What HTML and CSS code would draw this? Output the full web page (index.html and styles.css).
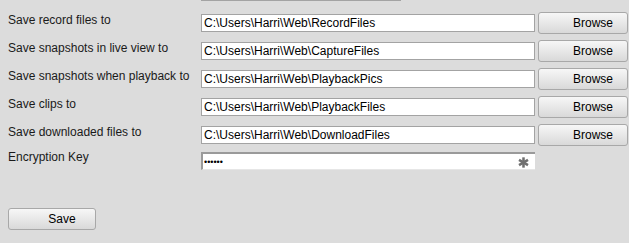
FILE: index.html
```html
<!DOCTYPE html>
<html>
<head>
<meta charset="utf-8">
<link rel="stylesheet" href="styles.css">
</head>
<body>
<div class="page">
  <div class="stub"></div>
  <div class="form">
    <div class="row">
      <label class="lbl">Save record files to</label>
      <input class="field" type="text" value="C:\Users\Harri\Web\RecordFiles">
      <button class="btn browse">Browse</button>
    </div>
    <div class="row">
      <label class="lbl">Save snapshots in live view to</label>
      <input class="field" type="text" value="C:\Users\Harri\Web\CaptureFiles">
      <button class="btn browse">Browse</button>
    </div>
    <div class="row">
      <label class="lbl">Save snapshots when playback to</label>
      <input class="field" type="text" value="C:\Users\Harri\Web\PlaybackPics">
      <button class="btn browse">Browse</button>
    </div>
    <div class="row">
      <label class="lbl">Save clips to</label>
      <input class="field" type="text" value="C:\Users\Harri\Web\PlaybackFiles">
      <button class="btn browse">Browse</button>
    </div>
    <div class="row">
      <label class="lbl">Save downloaded files to</label>
      <input class="field" type="text" value="C:\Users\Harri\Web\DownloadFiles">
      <button class="btn browse">Browse</button>
    </div>
    <div class="row row-key">
      <label class="lbl">Encryption Key</label>
      <div class="pwd">
        <input class="pwd-input" type="password" value="abcdef">
        <svg class="star" width="11" height="11" viewBox="0 0 10 10">
          <g stroke="#707070" stroke-width="2.3" stroke-linecap="butt">
            <line x1="5" y1="0.3" x2="5" y2="9.7"/>
            <line x1="0.9" y1="2.65" x2="9.1" y2="7.35"/>
            <line x1="0.9" y1="7.35" x2="9.1" y2="2.65"/>
          </g>
        </svg>
      </div>
    </div>
  </div>
  <button class="btn save">Save</button>
</div>
</body>
</html>
```

FILE: styles.css
```css
html, body {
  margin: 0;
  padding: 0;
  background: #dcdcdc;
}
body {
  font-family: "Liberation Sans", Arial, sans-serif;
  font-size: 12px;
  color: #1a1a1a;
}
.page {
  width: 629px;
  height: 243px;
  padding-left: 8px;
  box-sizing: border-box;
  overflow: hidden;
}
.stub {
  margin-left: 193px;
  width: 198px;
  height: 0;
  border: 1px solid #a3a3a3;
  border-top: none;
  background: #fff;
}
.form {
  margin-top: 11px;
}
.row {
  display: flex;
  align-items: flex-start;
  height: 28px;
}
.lbl {
  width: 193px;
  line-height: 14px;
  margin-top: 1px;
  white-space: nowrap;
}
.field {
  width: 334px;
  height: 18px;
  margin: 2px 0 0 0;
  box-sizing: border-box;
  border: 1px solid #a3a3a3;
  background: #fff;
  padding: 0 2px;
  font-family: "Liberation Sans", Arial, sans-serif;
  font-size: 12px;
  color: #000;
  outline: none;
}
.btn {
  height: 22px;
  box-sizing: border-box;
  border: 1px solid #a8a8a8;
  border-radius: 3px;
  background: linear-gradient(#f7f7f7, #d9d9d9);
  font-family: "Liberation Sans", Arial, sans-serif;
  font-size: 12px;
  color: #000;
  padding: 0 0 0 20px;
  text-align: center;
  line-height: 20px;
}
.browse {
  width: 90px;
  margin-left: 3px;
}
.row-key {
  height: 25px;
  margin-top: -3px;
}
.pwd {
  width: 334px;
  height: 18px;
  margin-top: 3px;
  box-sizing: border-box;
  border-top: 2px solid #9a9a9a;
  border-left: 2px solid #9a9a9a;
  border-bottom: 1px solid #e6e6e6;
  background: #fff;
  display: flex;
  align-items: center;
  justify-content: space-between;
}
.pwd-input {
  border: none;
  outline: none;
  background: transparent;
  padding: 0 0 0 1px;
  width: 280px;
  height: 15px;
  font-family: "Liberation Sans", Arial, sans-serif;
  font-size: 9px;
  color: #000;
  letter-spacing: 0;
}
.star {
  margin-right: 6px;
  margin-top: 2px;
}
.save {
  display: block;
  width: 88px;
  margin-top: 34px;
}
```
